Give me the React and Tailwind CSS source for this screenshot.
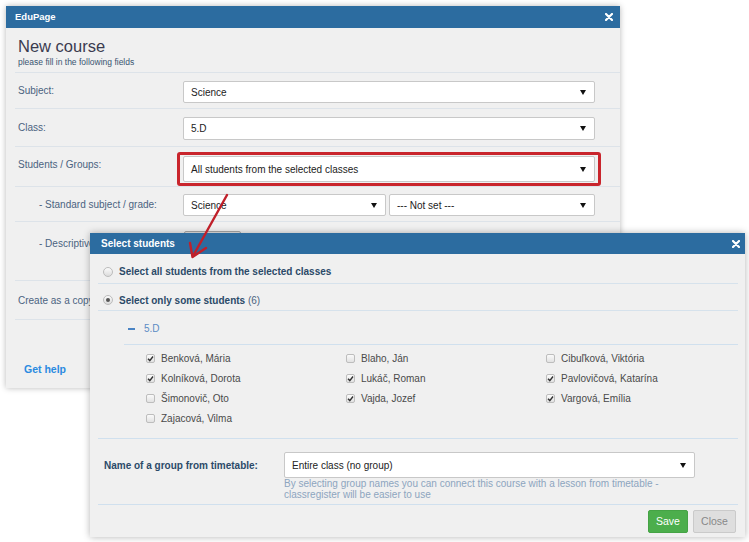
import React from "react";

const students = [
  { name: "Benková, Mária", checked: true },
  { name: "Blaho, Ján", checked: false },
  { name: "Cibuľková, Viktória", checked: false },
  { name: "Kolníková, Dorota", checked: true },
  { name: "Lukáč, Roman", checked: true },
  { name: "Pavlovičová, Katarína", checked: true },
  { name: "Šimonovič, Oto", checked: false },
  { name: "Vajda, Jozef", checked: true },
  { name: "Vargová, Emília", checked: true },
  { name: "Zajacová, Vilma", checked: false },
];

const Caret = () => (
  <svg width="6" height="5" viewBox="0 0 6 5" className="shrink-0">
    <polygon points="0,0 6,0 3,5" fill="#111" />
  </svg>
);

const CloseX = () => (
  <svg width="8" height="8" viewBox="0 0 8 8">
    <path d="M1 1 L7 7 M7 1 L1 7" stroke="#fff" strokeWidth="2.2" strokeLinecap="round" />
  </svg>
);

const Select = ({ value, className = "" }) => (
  <div
    className={`flex items-center justify-between bg-white border border-[#c8c8c8] rounded-[2px] pl-[7px] pr-[8px] text-[10px] text-[#222] ${className}`}
  >
    <span>{value}</span>
    <Caret />
  </div>
);

const Check = ({ checked }) => (
  <span className="w-[9px] h-[9px] rounded-[2px] border border-[#bdbdbd] bg-gradient-to-b from-[#fafafa] to-[#e2e2e2] flex items-center justify-center shrink-0">
    {checked && (
      <svg width="7" height="7" viewBox="0 0 7 7">
        <path d="M1 3.8 L2.8 5.6 L6 1.5" stroke="#333" strokeWidth="1.4" fill="none" />
      </svg>
    )}
  </span>
);

const Radio = ({ selected }) => (
  <span className="w-[10px] h-[10px] rounded-full border border-[#bcbcbc] bg-gradient-to-b from-[#fbfbfb] to-[#dcdcdc] flex items-center justify-center shrink-0">
    {selected && <span className="w-[4px] h-[4px] rounded-full bg-[#555]" />}
  </span>
);

const Row = ({ label, children, className = "", labelClass = "" }) => (
  <div className={`flex border-b border-[#dde3e9] ${className}`}>
    <div className={`w-[168px] pl-[3px] text-[10px] text-[#4b6380] shrink-0 ${labelClass}`}>
      {label}
    </div>
    {children}
  </div>
);

export default function App() {
  return (
    <div className="relative w-[749px] h-[542px] bg-white overflow-hidden font-['Liberation_Sans',Arial,sans-serif]">
      {/* New course dialog */}
      <div className="absolute left-[6px] top-[6px] w-[614px] h-[382px] bg-[#f0f0f0] shadow-[0_0_6px_rgba(0,0,0,0.28)] flex flex-col">
        <div className="h-[22px] bg-[#2c6ca0] flex items-center justify-between pl-[9px] pr-[7px] shrink-0">
          <span className="text-white font-bold text-[9.5px]">EduPage</span>
          <CloseX />
        </div>
        <div className="pl-[9px] flex flex-col">
          <div className="pt-[9px] pb-[5px] pl-[3px] border-b border-[#dde3e9]">
            <div className="text-[16.5px] leading-[18px] text-[#3b3b4f]">New course</div>
            <div className="text-[8.5px] leading-[10px] mt-[2px] text-[#3a5570]">
              please fill in the following fields
            </div>
          </div>

          <Row label="Subject:" className="h-[36px] items-center">
            <Select value="Science" className="w-[412px] h-[22px] mt-[3px]" />
          </Row>
          <Row label="Class:" className="h-[38px] items-center">
            <Select value="5.D" className="w-[412px] h-[23px] mt-[1px]" />
          </Row>
          <Row label="Students / Groups:" className="h-[40px] items-end" labelClass="self-center mb-[4px]">
            <div className="-ml-[6px] w-[424px] border-[3px] border-[#c9252c] rounded-[3px] px-[3px] py-[1px]">
              <Select value="All students from the selected classes" className="h-[26px] pl-[7px]" />
            </div>
          </Row>
          <Row
            label="- Standard subject / grade:"
            className="h-[35px] items-center"
            labelClass="pl-[24px] text-[9px]"
          >
            <div className="flex gap-[3px] mt-[2px]">
              <Select value="Science" className="w-[203px] h-[22px]" />
              <Select value="--- Not set ---" className="w-[206px] h-[22px]" />
            </div>
          </Row>
          <Row
            label={<span className="block w-[51px] overflow-hidden whitespace-nowrap">- Descriptive evaluation:</span>}
            className="h-[59px] items-start pt-[9px]"
            labelClass="pl-[24px] text-[9px] pt-[5px]"
          >
            <div className="w-[57px] h-[24px] ml-[1px] border border-[#a8a8a8] rounded-[2px] bg-[#e4e4e4]" />
          </Row>
          <Row
            label={<span className="block w-[72px] overflow-hidden whitespace-nowrap">Create as a copy of an existing course:</span>}
            className="h-[39px] items-center"
          >
            <span />
          </Row>
          <div className="pt-[42px] pl-[9px] text-[10.5px] font-bold text-[#2a8ae0]">Get help</div>
        </div>
      </div>

      {/* Select students dialog */}
      <div className="absolute left-[90px] top-[233px] w-[655px] h-[304px] bg-[#f0f0f0] shadow-[0_0_7px_rgba(0,0,0,0.3)] flex flex-col">
        <div className="h-[21px] bg-[#2c6ca0] flex items-center justify-between pl-[11px] pr-[5px] shrink-0">
          <span className="text-white font-bold text-[10px]">Select students</span>
          <CloseX />
        </div>
        <div className="pl-[8px] pr-[7px] flex flex-col">
          <div className="h-[30px] flex items-center gap-[6px] pl-[5px] pt-[6px] border-b border-[#d6e2ec]">
            <Radio />
            <span className="text-[10px] font-bold text-[#2b4a68]">
              Select all students from the selected classes
            </span>
          </div>
          <div className="h-[27px] flex items-center gap-[6px] pl-[5px] pt-[6px] border-b border-[#d6e2ec]">
            <Radio selected />
            <span className="text-[10px] text-[#2b4a68]">
              <span className="font-bold">Select only some students</span>{" "}
              <span className="text-[#4b6380]">(6)</span>
            </span>
          </div>
          <div className="pl-[26px]">
            <div className="h-[34px] flex items-center border-b border-[#d0e0ee]">
              <span className="w-[7px] h-[2px] bg-[#4a84c4] ml-[4px] mt-[2px]" />
              <span className="ml-[9px] mt-[1px] text-[10px] text-[#5b8bc4]">5.D</span>
            </div>
            <div className="grid grid-cols-[200px_200px_200px] pl-[22px] pt-[3px] pb-[10px]">
              {students.map((s) => (
                <div key={s.name} className="h-[20px] flex items-center gap-[6px]">
                  <Check checked={s.checked} />
                  <span className="text-[10px] text-[#4a4a4a]">{s.name}</span>
                </div>
              ))}
            </div>
          </div>
          <div className="flex border-t border-[#d0e0ee] border-b pt-[13px] pb-[4px]">
            <div className="w-[186px] h-[26px] pl-[6px] flex items-center text-[10px] font-bold text-[#2b4a68] shrink-0">
              Name of a group from timetable:
            </div>
            <div className="w-[411px]">
              <Select value="Entire class (no group)" className="h-[26px]" />
              <div className="text-[10px] leading-[11px] text-[#8da5bf]">
                By selecting group names you can connect this course with a lesson from timetable - classregister will be easier to use
              </div>
            </div>
          </div>
          <div className="flex justify-end gap-[5px] pt-[5px] pr-[2px]">
            <div className="w-[40px] h-[23px] rounded-[2px] bg-[#4cae4c] border border-[#45a345] text-white text-[10.5px] flex items-center justify-center">
              Save
            </div>
            <div className="w-[43px] h-[23px] rounded-[2px] bg-[#dedede] border border-[#cacaca] text-[#888] text-[10.5px] flex items-center justify-center">
              Close
            </div>
          </div>
        </div>
      </div>

      {/* red arrow annotation */}
      <svg className="absolute left-0 top-0 pointer-events-none" width="749" height="542">
        <path d="M227 195 Q 212 222 193 256" stroke="#c0202a" strokeWidth="2.4" fill="none" strokeLinecap="round" />
        <path d="M190 243 L192.5 257 L206 248" stroke="#c0202a" strokeWidth="2.4" fill="none" strokeLinecap="round" strokeLinejoin="round" />
      </svg>
    </div>
  );
}
